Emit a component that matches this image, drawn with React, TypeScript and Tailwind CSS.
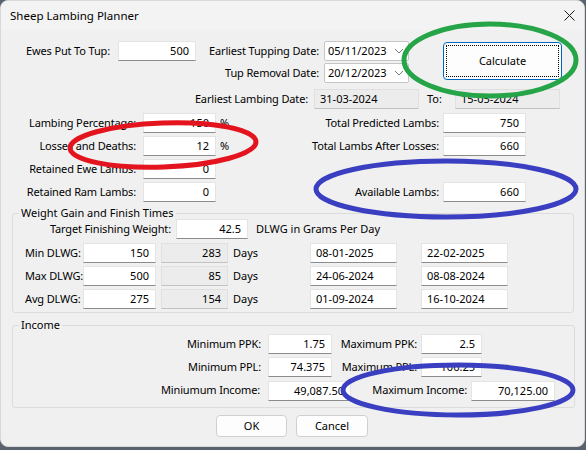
import React from 'react';

const font = { fontFamily: '"Noto Sans", "Open Sans", sans-serif' };

function Field({ w, value, className = '' }: { w: string; value: string; className?: string }) {
  return (
    <div className={`${w} h-[20px] shrink-0 bg-white border border-[#e4e4e4] border-b-[#8c8c8c] text-right pr-[6px] leading-[18px] ${className}`}>
      {value}
    </div>
  );
}

function ReadOnly({ w, value, left = false, className = '' }: { w: string; value: string; left?: boolean; className?: string }) {
  return (
    <div className={`${w} h-[20px] shrink-0 bg-[#ececec] border border-[#e0e0e0] border-b-[#c2c2c2] leading-[18px] ${left ? 'text-left pl-[5px]' : 'text-right pr-[6px]'} ${className}`}>
      {value}
    </div>
  );
}

function DateBox({ w, value, className = '' }: { w: string; value: string; className?: string }) {
  return (
    <div className={`${w} h-[20px] shrink-0 bg-white border border-[#e4e4e4] border-b-[#8c8c8c] text-left pl-[5px] leading-[18px] ${className}`}>
      {value}
    </div>
  );
}

function DatePicker({ value }: { value: string }) {
  return (
    <div className="ml-[5px] w-[85px] h-[20px] shrink-0 bg-white border border-[#c6c6c6] rounded-[2px] flex items-center pl-[3px] leading-[18px]">
      <span className="flex-1">{value}</span>
      <svg width="10" height="6" viewBox="0 0 10 6" className="mr-[4px]">
        <polyline points="1,1 5,5 9,1" fill="none" stroke="#7a7a7a" strokeWidth="1" />
      </svg>
    </div>
  );
}

function Label({ w, children, left = false }: { w: string; children: React.ReactNode; left?: boolean }) {
  return <div className={`${w} shrink-0 whitespace-nowrap tracking-[-0.15px] ${left ? 'text-left' : 'text-right'}`}>{children}</div>;
}

export default function App() {
  return (
    <div className="w-[586px] h-[450px] bg-[#5a6270] overflow-hidden" style={font}>
      <div className="relative w-[585px] h-[447px] bg-[#f0f0f0] rounded-[8px] border border-[#d8d8d8] text-[11px] text-black overflow-hidden">
        {/* title bar */}
        <div className="h-[29px] flex items-center justify-between pl-[9px] pr-[9px] bg-[#f3f3f3]">
          <span className="text-[11.5px]">Sheep Lambing Planner</span>
          <svg width="11" height="11" viewBox="0 0 11 11">
            <path d="M0.5 0.5 L10.5 10.5 M10.5 0.5 L0.5 10.5" stroke="#1a1a1a" strokeWidth="1" />
          </svg>
        </div>

        {/* top block */}
        <div className="flex mt-[11px]">
          <div className="flex flex-col gap-[2px] w-[410px]">
            <div className="flex items-center h-[20px]">
              <Label w="w-[109px]">Ewes Put To Tup:</Label>
              <Field w="w-[78px] ml-[8px]" value="500" />
              <Label w="w-[123px]">Earliest Tupping Date:</Label>
              <DatePicker value="05/11/2023" />
            </div>
            <div className="flex items-center h-[20px] pl-[195px]">
              <Label w="w-[123px]">Tup Removal Date:</Label>
              <DatePicker value="20/12/2023" />
            </div>
          </div>
          <button className="ml-[32px] mt-[1px] w-[119px] h-[38px] bg-[#fdfdfd] border border-[#0067c0] rounded-[4px] p-[2px]">
            <div className="w-full h-full border border-dotted border-black flex items-center justify-center">Calculate</div>
          </button>
        </div>

        <div className="flex items-center h-[20px] mt-[6px]">
          <Label w="w-[307px]">Earliest Lambing Date:</Label>
          <ReadOnly w="w-[105px] ml-[6px]" value="31-03-2024" left />
          <div className="w-[28px] ml-[8px] shrink-0">To:</div>
          <ReadOnly w="w-[105px]" value="15-05-2024" left />
        </div>

        <div className="flex flex-col gap-[3px] mt-[4px]">
          <div className="flex items-center h-[20px]">
            <Label w="w-[135px]">Lambing Percentage:</Label>
            <Field w="w-[73px] ml-[7px]" value="150" />
            <div className="w-[223px] pl-[4px] shrink-0">%</div>
            <Label w="w-[0px] overflow-visible flex justify-end"><span>Total Predicted Lambs:</span></Label>
            <Field w="w-[83px] ml-[4px]" value="750" />
          </div>
          <div className="flex items-center h-[20px]">
            <Label w="w-[135px]">Losses and Deaths:</Label>
            <Field w="w-[73px] ml-[7px]" value="12" />
            <div className="w-[223px] pl-[4px] shrink-0">%</div>
            <Label w="w-[0px] overflow-visible flex justify-end"><span>Total Lambs After Losses:</span></Label>
            <Field w="w-[83px] ml-[4px]" value="660" />
          </div>
          <div className="flex items-center h-[20px]">
            <Label w="w-[135px]">Retained Ewe Lambs:</Label>
            <Field w="w-[73px] ml-[7px]" value="0" />
          </div>
          <div className="flex items-center h-[20px]">
            <Label w="w-[135px]">Retained Ram Lambs:</Label>
            <Field w="w-[73px] ml-[7px]" value="0" />
            <div className="w-[223px] shrink-0" />
            <Label w="w-[0px] overflow-visible flex justify-end"><span>Available Lambs:</span></Label>
            <Field w="w-[83px] ml-[4px]" value="660" />
          </div>
        </div>

        {/* weight gain group */}
        <fieldset className="ml-[11px] mt-[4px] w-[562px] border border-[#dcdcdc] rounded-[3px] pb-[3px]">
          <legend className="ml-[6px] px-[2px] leading-[14px]">Weight Gain and Finish Times</legend>
          <div className="flex items-center h-[20px] -mt-[1px]">
            <Label w="w-[158px]">Target Finishing Weight:</Label>
            <Field w="w-[72px] ml-[5px]" value="42.5" />
            <div className="ml-[8px] whitespace-nowrap">DLWG in Grams Per Day</div>
          </div>
          <div className="flex flex-col gap-[3px] mt-[4px]">
            {[
              ['Min DLWG:', '150', '283', '08-01-2025', '22-02-2025'],
              ['Max DLWG:', '500', '85', '24-06-2024', '08-08-2024'],
              ['Avg DLWG:', '275', '154', '01-09-2024', '16-10-2024'],
            ].map(([l, v, d, a, b]) => (
              <div key={l} className="flex items-center h-[20px] pl-[12px]">
                <Label w="w-[58px]" left>{l}</Label>
                <Field w="w-[73px]" value={v} />
                <ReadOnly w="w-[67px] ml-[5px]" value={d} />
                <div className="w-[82px] pl-[5px] shrink-0">Days</div>
                <DateBox w="w-[87px]" value={a} />
                <DateBox w="w-[87px] ml-[24px]" value={b} />
              </div>
            ))}
          </div>
        </fieldset>

        {/* income group */}
        <fieldset className="ml-[11px] mt-[5px] w-[563px] border border-[#dcdcdc] rounded-[3px] pb-[6px]">
          <legend className="ml-[6px] px-[2px] leading-[14px]">Income</legend>
          <div className="flex flex-col gap-[3px] mt-[2px]">
            <div className="flex items-center h-[20px]">
              <Label w="w-[248px]">Minimum PPK:</Label>
              <Field w="w-[64px] ml-[7px]" value="1.75" />
              <Label w="w-[85px]">Maximum PPK:</Label>
              <Field w="w-[61px] ml-[4px]" value="2.5" />
            </div>
            <div className="flex items-center h-[20px]">
              <Label w="w-[248px]">Minimum PPL:</Label>
              <Field w="w-[64px] ml-[7px]" value="74.375" />
              <Label w="w-[85px]">Maximum PPL:</Label>
              <Field w="w-[61px] ml-[4px]" value="106.25" />
            </div>
            <div className="flex items-center h-[21px]">
              <Label w="w-[247px]">Miniumum Income:</Label>
              <Field w="w-[83px] ml-[8px]" value="49,087.50" />
              <Label w="w-[116px]">Maximum Income:</Label>
              <Field w="w-[84px] ml-[4px]" value="70,125.00" />
            </div>
          </div>
        </fieldset>

        <div className="flex mt-[7px] pl-[215px] gap-[9px]">
          <button className="w-[71px] h-[22px] bg-[#fdfdfd] border border-[#d0d0d0] rounded-[4px]">OK</button>
          <button className="w-[72px] h-[22px] bg-[#fdfdfd] border border-[#d0d0d0] rounded-[4px]">Cancel</button>
        </div>

        {/* hand-drawn annotations */}
        <svg className="absolute left-[-1px] top-[-1px] pointer-events-none" width="586" height="450">
          <ellipse cx="490" cy="60" rx="86" ry="36" fill="none" stroke="#25a448" strokeWidth="5" />
          <ellipse cx="163" cy="145" rx="93" ry="22" fill="none" stroke="#e3141d" strokeWidth="5" transform="rotate(-2 163 145)" />
          <ellipse cx="446" cy="189" rx="130" ry="28" fill="none" stroke="#3a3ec0" strokeWidth="5" />
          <ellipse cx="458" cy="390" rx="115" ry="25" fill="none" stroke="#3a3ec0" strokeWidth="5" />
        </svg>
      </div>
    </div>
  );
}
